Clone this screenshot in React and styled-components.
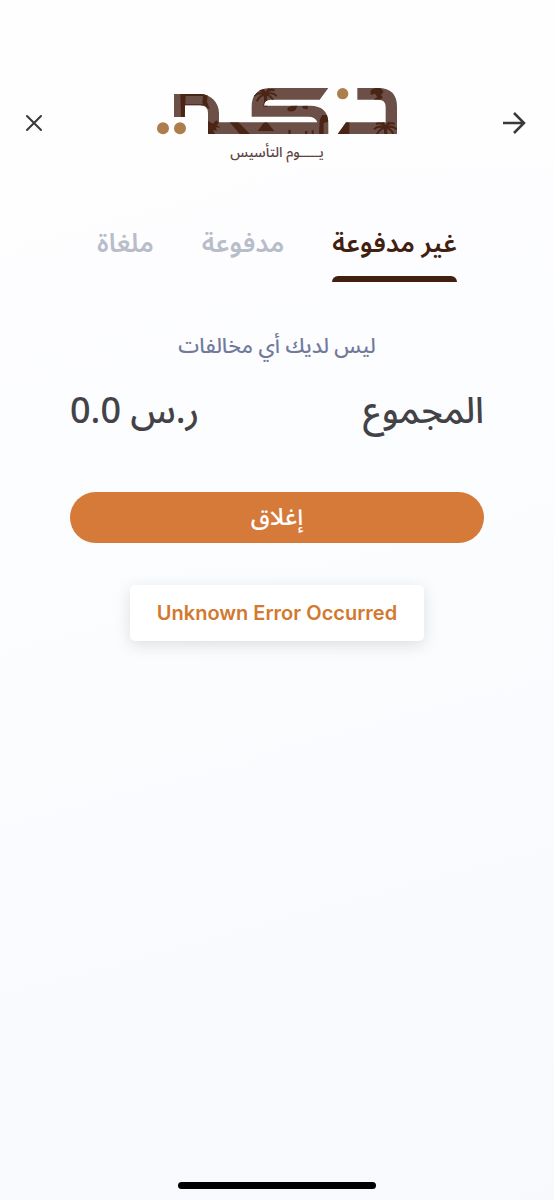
import React, { useState } from "react"
import styled, { createGlobalStyle } from "styled-components"

const GlobalStyle = createGlobalStyle`
  * {
    box-sizing: border-box;
  }

  body {
    margin: 0;
    font-family: "Noto Sans Arabic", "DejaVu Sans", sans-serif;
    font-weight: 500;
    background: #fbfbfe;
  }

  button {
    padding: 0;
    border: 0;
    background: none;
    font-family: inherit;
    font-weight: inherit;
    cursor: pointer;
  }
`

const Page = styled.div`
  display: flex;
  flex-direction: column;
  min-height: 100vh;
  background: linear-gradient(165deg, #fefeff 10%, #fbfcfe 50%, #f8f9fd 100%);
`

const Header = styled.header`
  display: flex;
  align-items: flex-start;
  justify-content: space-between;
  height: 166px;
  padding: 87px 24px 0;
  background: #fefefe;
`

const IconButton = styled.button`
  display: flex;
  margin-top: 20px;
  width: 32px;
  height: 32px;
  align-items: center;
  justify-content: ${({ side }) => side};
`

const Brand = styled.div`
  display: flex;
  flex-direction: column;
  align-items: center;
`

const Tagline = styled.span`
  font-size: 14px;
  line-height: 36px;
  color: #5b4340;
`

const Tabs = styled.nav`
  display: flex;
  justify-content: center;
  gap: 48px;
  padding: 60px 0 0;
`

const Tab = styled.button`
  height: 56px;
  font-size: 26px;
  font-weight: 600;
  line-height: 36px;
  color: ${({ active }) => (active ? "#42200f" : "#b9bdca")};

  &::after {
    content: "";
    display: block;
    height: 6px;
    margin-top: 14px;
    border-radius: 6px 6px 0 0;
    background: ${({ active }) => (active ? "#42200f" : "transparent")};
  }
`

const Main = styled.main`
  display: flex;
  flex-direction: column;
  align-items: center;
  padding: 48px 70px 0;
`

const Empty = styled.p`
  margin: 0;
  font-size: 21px;
  line-height: 32px;
  color: #727a9c;
`

const Total = styled.div`
  display: flex;
  justify-content: space-between;
  width: 100%;
  margin-top: 26px;
  font-size: 36px;
  line-height: 48px;
  color: #434347;
`

const CloseButton = styled.button`
  width: 100%;
  height: 51px;
  margin-top: 56px;
  border-radius: 26px;
  font-size: 24px;
  line-height: 48px;
  color: #fff;
  background: #d67a3a;
`

const Toast = styled.div`
  margin-top: 42px;
  padding: 12px 27px;
  border-radius: 5px;
  font-family: Inter, "Liberation Sans", sans-serif;
  font-size: 20px;
  font-weight: 600;
  line-height: 32px;
  color: #d2792f;
  background: #fff;
  box-shadow: 0 4px 16px rgba(0, 0, 0, 0.12);
`

const HomeBar = styled.div`
  width: 198px;
  height: 7px;
  margin: auto auto 11px;
  border-radius: 4px;
  background: #000;
`

const MARK =
  "M87 57H165A57 57 0 0 1 222 114V142H517Q512 125 490 125H320V95Q320 39 378 39H550L524 74H378Q357 74 357 92H495Q550 92 550 146V177H189V115Q189 91 165 91H120V126H87Z M637 39H700Q756 39 756 96V177H578L603 142H722V96Q722 74 700 74H637Z"

const Palm = ({ x, y }) => (
  <g transform={`translate(${x} ${y})`}>
    <path d="M-5 2Q-2 18 -6 40H6Q7 18 4 2Z" />
    <path
      d="M0 4Q-12 -16 -28 -8M0 4Q-20 -6 -34 8M0 4Q-16 4 -26 24M0 4Q12 -16 28 -8M0 4Q20 -6 34 8M0 4Q16 4 24 22M0 4Q-4 -10 -10 -16M0 4Q6 -10 12 -14"
      fill="none"
      stroke="#4a2415"
      strokeWidth="6"
    />
  </g>
)

const Logo = () => (
  <svg width="242" height="48" viewBox="33 36 726 144" aria-hidden="true">
    <clipPath id="mark">
      <path d={MARK} />
    </clipPath>
    <path d={MARK} fill="#6c5048" />
    <g clipPath="url(#mark)" fill="#4a2415">
      <path d="M106 57H189V63H122L119 126H108Z M110 88H178V92H110Z M174 60H188L186 80L194 102L186 98L172 84Z" />
      <path d="M189 138L204 146L214 136L222 144L215 150L226 158L212 157L216 168L204 164L210 177H189Z" />
      <path d="M254 142H280L315 177H284Z M338 168L355 145Q362 138 369 145L388 168Z" />
      <path d="M428 98Q440 90 458 91L452 104Q438 114 427 106Z M470 94L488 91V103L476 101Z M430 164H437V177H430Z M480 168H487V177H480Z M500 166H506V177H500Z" />
      <path d="M524 134L532 120H550V140L536 144V177H522Z" />
      <path d="M578 177L603 142H613V177Z" />
      <path d="M676 48Q686 36 706 39L716 50L708 60L714 68L704 74H686L697 66L690 56L678 60Z" />
      <Palm x={361} y={55} />
      <Palm x={721} y={155} />
    </g>
    <g fill="#ae7d4c">
      <circle cx="54" cy="160" r="18" />
      <circle cx="105" cy="160" r="18" />
      <circle cx="593" cy="56" r="17" />
    </g>
  </svg>
)

const CloseIcon = () => (
  <svg width="20" height="20" viewBox="0 0 20 20" aria-hidden="true">
    <path d="M3 3L17 17M17 3L3 17" stroke="#39393b" strokeWidth="2" strokeLinecap="round" />
  </svg>
)

const ArrowIcon = () => (
  <svg width="28" height="24" viewBox="0 0 28 24" aria-hidden="true">
    <path
      d="M1 12H22M12 2L22 12L12 22"
      fill="none"
      stroke="#39393b"
      strokeWidth="2.5"
    />
  </svg>
)

const tabs = ["غير مدفوعة", "مدفوعة", "ملغاة"]

const App = () => {
  const [current, setCurrent] = useState(0)

  return (
    <Page dir="rtl" lang="ar">
      <GlobalStyle />
      <Header>
        <IconButton type="button" side="flex-start" aria-label="رجوع">
          <ArrowIcon />
        </IconButton>
        <Brand>
          <Logo />
          <Tagline>يـــــوم التأسيس</Tagline>
        </Brand>
        <IconButton type="button" side="flex-end" aria-label="إغلاق">
          <CloseIcon />
        </IconButton>
      </Header>
      <Tabs>
        {tabs.map((label, i) => (
          <Tab
            key={label}
            type="button"
            active={i === current ? 1 : 0}
            onClick={() => setCurrent(i)}
          >
            {label}
          </Tab>
        ))}
      </Tabs>
      <Main>
        <Empty>ليس لديك أي مخالفات</Empty>
        <Total>
          <span>المجموع</span>
          <span>ر.س 0.0</span>
        </Total>
        <CloseButton type="button">إغلاق</CloseButton>
        <Toast role="alert" dir="ltr" lang="en">
          Unknown Error Occurred
        </Toast>
      </Main>
      <HomeBar />
    </Page>
  )
}

export default App
